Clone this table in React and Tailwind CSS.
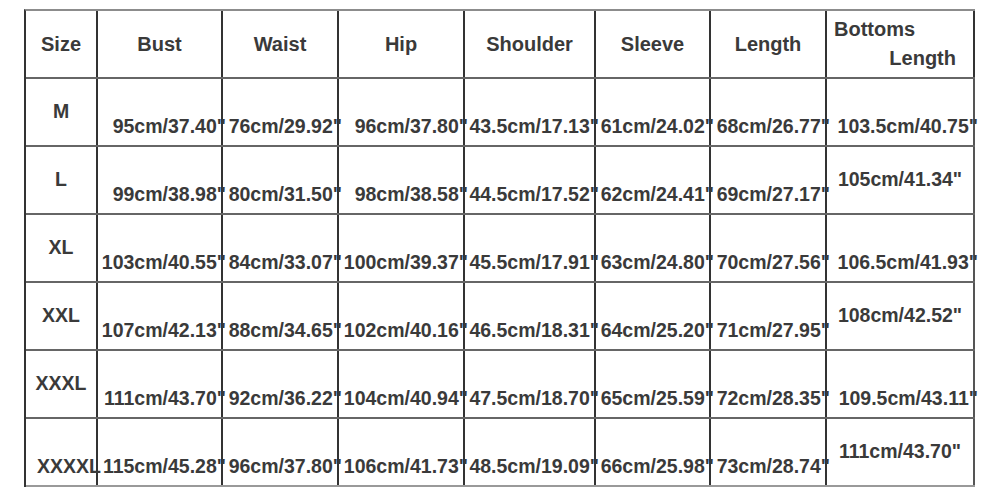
const widths = [
  "w-[72px]",
  "w-[125px]",
  "w-[116px]",
  "w-[126px]",
  "w-[131px]",
  "w-[115px]",
  "w-[116px]",
  "w-[148px]",
];

const headers = ["Size", "Bust", "Waist", "Hip", "Shoulder", "Sleeve", "Length"];

// last column of some rows sits centered in its cell
const rows = [
  { size: "M", values: ['95cm/37.40"', '76cm/29.92"', '96cm/37.80"', '43.5cm/17.13"', '61cm/24.02"', '68cm/26.77"', '103.5cm/40.75"'] },
  { size: "L", mid: true, values: ['99cm/38.98"', '80cm/31.50"', '98cm/38.58"', '44.5cm/17.52"', '62cm/24.41"', '69cm/27.17"', '105cm/41.34"'] },
  { size: "XL", values: ['103cm/40.55"', '84cm/33.07"', '100cm/39.37"', '45.5cm/17.91"', '63cm/24.80"', '70cm/27.56"', '106.5cm/41.93"'] },
  { size: "XXL", mid: true, values: ['107cm/42.13"', '88cm/34.65"', '102cm/40.16"', '46.5cm/18.31"', '64cm/25.20"', '71cm/27.95"', '108cm/42.52"'] },
  { size: "XXXL", values: ['111cm/43.70"', '92cm/36.22"', '104cm/40.94"', '47.5cm/18.70"', '65cm/25.59"', '72cm/28.35"', '109.5cm/43.11"'] },
  { size: "XXXXL", mid: true, low: true, values: ['115cm/45.28"', '96cm/37.80"', '106cm/41.73"', '48.5cm/19.09"', '66cm/25.98"', '73cm/28.74"', '111cm/43.70"'] },
];

function Cell({ w, className = "", children }) {
  return (
    <div className={`${w} shrink-0 h-full border-r-2 border-[#333] flex ${className}`}>
      {children}
    </div>
  );
}

function DataCell({ w, value }) {
  return (
    <Cell w={w} className="items-end justify-end pb-[9px]">
      <span className="whitespace-nowrap -mr-[5px] leading-[20px]">{value}</span>
    </Cell>
  );
}

export default function App() {
  return (
    <div className="min-h-screen bg-white pt-[9px] pl-[24px] font-['Liberation_Sans',Arial,sans-serif] font-bold text-[19.5px] text-[#3a3a3a]">
      <div className="w-[951px] border-l-2 border-t-2 border-l-[#333] border-t-[#8c8c8c]">
        <div className="flex h-[68px] border-b-2 border-[#666]">
          {headers.map((h, i) => (
            <Cell key={h} w={widths[i]} className="items-center justify-center">
              <span className="whitespace-nowrap text-[20px]">{h}</span>
            </Cell>
          ))}
          <Cell w={widths[7]} className="flex-col justify-center leading-[29px] text-[20px]">
            <span className="pl-[7px] text-left">Bottoms</span>
            <span className="pr-[17px] text-right">Length</span>
          </Cell>
        </div>
        {rows.map((r, ri) => (
          <div
            key={r.size}
            className={`flex h-[68px] border-b-2 ${ri === rows.length - 1 ? "border-[#999]" : "border-[#666]"}`}
          >
            {r.low ? (
              <DataCell w={widths[0]} value={r.size} />
            ) : (
              <Cell w={widths[0]} className="items-center justify-center">
                <span>{r.size}</span>
              </Cell>
            )}
            {r.values.slice(0, 6).map((v, i) => (
              <DataCell key={i} w={widths[i + 1]} value={v} />
            ))}
            {r.mid ? (
              <Cell w={widths[7]} className="items-center justify-center border-r-[#555]">
                <span className="whitespace-nowrap">{r.values[6]}</span>
              </Cell>
            ) : (
              <Cell w={widths[7]} className="items-end justify-end pb-[9px] border-r-[#555]">
                <span className="whitespace-nowrap -mr-[5px] leading-[20px]">{r.values[6]}</span>
              </Cell>
            )}
          </div>
        ))}
      </div>
    </div>
  );
}
